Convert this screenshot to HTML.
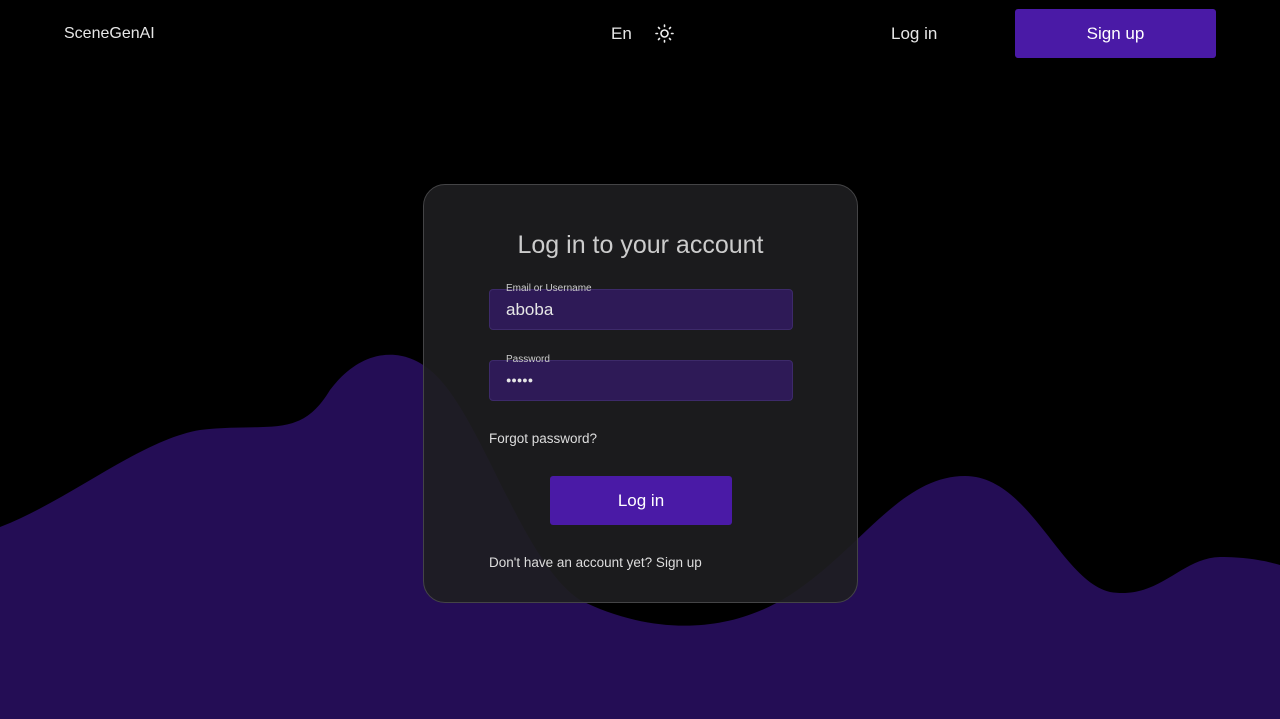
<!DOCTYPE html>
<html><head><style>
body{margin:0;width:1280px;height:719px;background:#000;overflow:hidden;position:relative;font-family:"Liberation Sans",sans-serif;color:#ddd}
svg.w{position:absolute;left:0;top:0}
.t{position:absolute;font-size:17px;color:#e6e6e6}
.btn{position:absolute;background:#4a1aa6;color:#fff;border-radius:3px;text-align:center}
.card{position:absolute;left:423px;top:184px;width:433px;height:417px;border:1px solid #444446;border-radius:22px;background:rgba(30,30,32,0.9)}
.in{position:absolute;left:65px;width:302px;height:39px;border:1px solid #3d2a6a;border-radius:4px;background:#2e1a57}
.lab{position:absolute;left:16px;top:-7px;font-size:10px;color:#ccc}
.val{position:absolute;left:16px;top:10px;font-size:17px;color:#e6e6e6}
</style></head><body>
<svg class="w" width="1280" height="719"><path fill="#240d55" d="M0 527 C70 500 140 440 200 430 C270 422 300 440 330 390 C360 350 400 345 430 370 C480 410 520 560 580 600 C640 630 720 640 790 595 C860 550 900 476 965 476 C1030 476 1060 580 1110 592 C1160 600 1180 558 1220 557 C1250 557 1270 562 1280 565 L1280 719 L0 719Z"/></svg>
<div class="t" style="left:64px;top:25px;font-size:16px">SceneGenAI</div>
<div class="t" style="left:611px;top:24px">En</div>
<svg style="position:absolute;left:655px;top:24px" width="19" height="19" viewBox="0 0 19 19" fill="none" stroke="#eee" stroke-width="1.6" stroke-linecap="round"><circle cx="9.5" cy="9.5" r="3.5"/><path d="M9.5 1v1.5M9.5 16.5V18M1 9.5h1.5M16.5 9.5H18M3.5 3.5l1 1M14.5 14.5l1 1M3.5 15.5l1-1M14.5 4.5l1-1"/></svg>
<div class="t" style="left:891px;top:24px">Log in</div>
<div class="btn" style="left:1015px;top:9px;width:201px;height:49px;line-height:49px;font-size:17px">Sign up</div>
<div class="card">
<div style="position:absolute;left:0;right:0;top:46px;text-align:center;font-size:25px;color:#ccc">Log in to your account</div>
<div class="in" style="top:104px"><div class="lab">Email or Username</div><div class="val">aboba</div></div>
<div class="in" style="top:175px"><div class="lab">Password</div><div class="val" style="font-size:9px;top:14px;letter-spacing:0">●●●●●</div></div>
<div style="position:absolute;left:65px;top:246px;font-size:13.5px;color:#ddd">Forgot password?</div>
<div class="btn" style="left:126px;top:291px;width:182px;height:49px;line-height:49px;font-size:17px">Log in</div>
<div style="position:absolute;left:65px;top:370px;font-size:13.5px;color:#ddd">Don't have an account yet? Sign up</div>
</div>
</body></html>
